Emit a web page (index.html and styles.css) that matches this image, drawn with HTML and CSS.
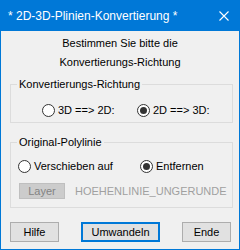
FILE: index.html
```html
<!DOCTYPE html>
<html lang="de">
<head>
    <meta charset="UTF-8">
    <title>2D-3D-Plinien-Konvertierung</title>
    <link rel="stylesheet" href="styles.css">
</head>
<body>
    <div class="window">
        <header class="titlebar">
            <span class="title">* 2D-3D-Plinien-Konvertierung *</span>
            <svg class="close" width="10" height="10" viewBox="0 0 10 10">
                <path d="M0.5 0.5 L9.5 9.5 M9.5 0.5 L0.5 9.5" stroke="#fff" stroke-width="1.1" fill="none"/>
            </svg>
        </header>

        <main class="content">
            <p class="prompt">Bestimmen Sie bitte die<br>Konvertierungs-Richtung</p>

            <fieldset class="group group-direction">
                <legend>Konvertierungs-Richtung</legend>
                <div class="radio-row">
                    <label class="radio radio-a"><input type="radio" name="dir"> 3D ==&gt; 2D:</label>
                    <label class="radio"><input type="radio" name="dir" checked> 2D ==&gt; 3D:</label>
                </div>
            </fieldset>

            <fieldset class="group group-original">
                <legend>Original-Polylinie</legend>
                <div class="radio-row">
                    <label class="radio radio-b"><input type="radio" name="orig"> Verschieben auf</label>
                    <label class="radio"><input type="radio" name="orig" checked> Entfernen</label>
                </div>
                <div class="layer-row">
                    <button class="btn btn-layer" disabled>Layer</button>
                    <span class="layer-name">HOEHENLINIE_UNGERUNDE</span>
                </div>
            </fieldset>

            <div class="actions">
                <button class="btn btn-small">Hilfe</button>
                <button class="btn btn-main">Umwandeln</button>
                <button class="btn btn-small">Ende</button>
            </div>
        </main>
    </div>
</body>
</html>
```

FILE: styles.css
```css
* {
    box-sizing: border-box;
    margin: 0;
    padding: 0;
}

body {
    font-family: 'Liberation Sans', Arial, sans-serif;
    font-size: 11px;
    color: #000;
    background-color: #f0f0f0;
}

.window {
    width: 240px;
    height: 250px;
    border: 1px solid #0078d7;
    background-color: #f0f0f0;
    display: flex;
    flex-direction: column;
}

.titlebar {
    height: 30px;
    background-color: #0078d7;
    color: #fff;
    display: flex;
    align-items: center;
    justify-content: space-between;
    padding: 0 10px 0 7px;
}

.title {
    font-size: 12px;
}

.prompt {
    margin-top: 3px;
    line-height: 19px;
    text-align: center;
}

.group {
    border: 1px solid #dcdcdc;
    margin: 6px 6px 0 9px;
    padding: 9px 0 2px;
}

.group legend {
    margin-left: 6px;
    padding: 0 2px;
    line-height: 13px;
}

.group-original {
    margin-top: 13px;
    padding: 7px 0 8px;
}

.radio-row {
    display: flex;
    align-items: center;
    height: 20px;
}

.group-direction .radio-row {
    padding-left: 31px;
}

.group-original .radio-row {
    padding-left: 7px;
}

.radio {
    display: flex;
    align-items: center;
    gap: 3px;
}

.radio-a {
    width: 95px;
}

.radio-b {
    width: 122px;
}

.radio input {
    appearance: none;
    width: 13px;
    height: 13px;
    border: 1px solid #333;
    border-radius: 50%;
    background-color: #fff;
    display: flex;
    align-items: center;
    justify-content: center;
}

.radio input:checked::after {
    content: '';
    width: 7px;
    height: 7px;
    border-radius: 50%;
    background-color: #333;
}

.layer-row {
    display: flex;
    align-items: center;
    gap: 10px;
    margin-top: 7px;
    padding-left: 8px;
}

.btn {
    font-family: inherit;
    font-size: 11px;
    color: #000;
    background-color: #e1e1e1;
    border: 1px solid #adadad;
}

.btn-layer {
    width: 46px;
    height: 16px;
    background-color: #cccccc;
    border-color: #bfbfbf;
    color: #838383;
}

.layer-name {
    color: #a0a0a0;
}

.actions {
    display: flex;
    justify-content: space-between;
    margin-top: 14px;
    padding: 0 8px 0 9px;
}

.actions .btn {
    height: 20px;
}

.btn-small {
    width: 49px;
}

.btn-main {
    width: 79px;
    border: 2px solid #0078d7;
}
```
